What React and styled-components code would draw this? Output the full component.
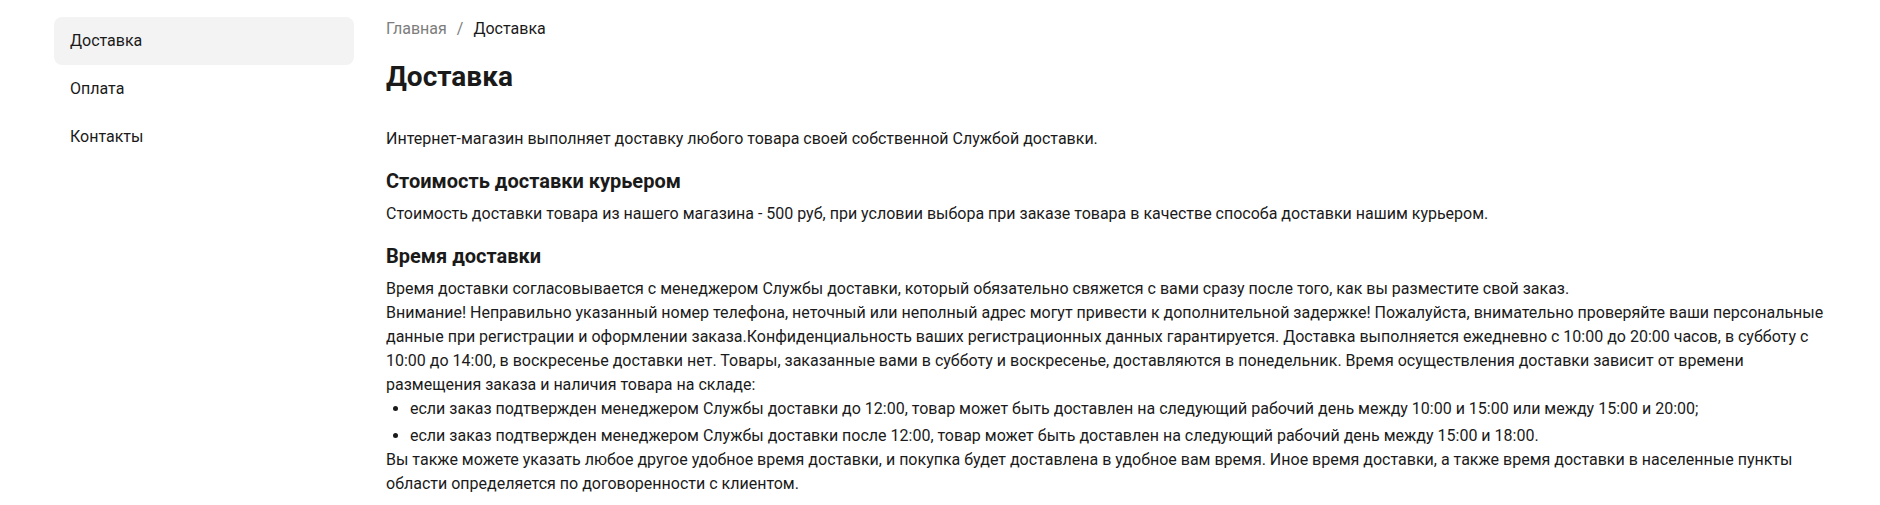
import { createGlobalStyle, styled } from "styled-components";

const GlobalStyle = createGlobalStyle`
  * { box-sizing: border-box; }
  body {
    margin: 0;
    background: #fff;
    font-family: Roboto, "Noto Sans", Arial, sans-serif;
    color: #1a1a1a;
  }
`;

const Page = styled.div`
  display: flex;
  gap: 32px;
  padding: 17px 54px 20px 54px;
`;

const Sidebar = styled.nav`
  width: 300px;
  flex-shrink: 0;
  display: flex;
  flex-direction: column;
`;

const NavItem = styled.a`
  display: block;
  padding: 12px 16px;
  font-size: 16px;
  line-height: 24px;
  color: #1a1a1a;
  text-decoration: none;
  border-radius: 8px;
  background: ${(p) => (p.$active ? "#f3f3f3" : "transparent")};
`;

const Main = styled.main`
  flex: 1;
  min-width: 0;
`;

const Breadcrumbs = styled.div`
  display: flex;
  gap: 10px;
  font-size: 16px;
  line-height: 24px;
`;

const Crumb = styled.span`
  color: ${(p) => (p.$muted ? "#7d7d7d" : "#1a1a1a")};
`;

const Title = styled.h1`
  margin: 18px 0 32px;
  font-size: 28px;
  line-height: 36px;
  font-weight: 700;
`;

const Subtitle = styled.h3`
  margin: 18px 0 9px;
  font-size: 20px;
  line-height: 24px;
  font-weight: 700;
`;

const Text = styled.p`
  margin: 0;
  font-size: 16px;
  line-height: 24px;
`;

const List = styled.ul`
  margin: 0;
  padding-left: 24px;
  font-size: 16px;
  line-height: 24px;

  li + li {
    margin-top: 3px;
  }
`;

const menu = [
  { label: "Доставка", active: true },
  { label: "Оплата" },
  { label: "Контакты" },
];

const App = () => {
  return (
    <Page>
      <GlobalStyle />
      <Sidebar>
        {menu.map((m) => (
          <NavItem key={m.label} href="#" $active={m.active}>
            {m.label}
          </NavItem>
        ))}
      </Sidebar>
      <Main>
        <Breadcrumbs>
          <Crumb $muted>Главная</Crumb>
          <Crumb $muted>/</Crumb>
          <Crumb>Доставка</Crumb>
        </Breadcrumbs>
        <Title>Доставка</Title>
        <Text>
          Интернет-магазин выполняет доставку любого товара своей собственной
          Службой доставки.
        </Text>
        <Subtitle>Стоимость доставки курьером</Subtitle>
        <Text>
          Стоимость доставки товара из нашего магазина - 500 руб, при условии
          выбора при заказе товара в качестве способа доставки нашим курьером.
        </Text>
        <Subtitle>Время доставки</Subtitle>
        <Text>
          Время доставки согласовывается с менеджером Службы доставки, который
          обязательно свяжется с вами сразу после того, как вы разместите свой
          заказ.
          <br />
          Внимание! Неправильно указанный номер телефона, неточный или неполный
          адрес могут привести к дополнительной задержке! Пожалуйста,
          внимательно проверяйте ваши персональные данные при регистрации и
          оформлении заказа.Конфиденциальность ваших регистрационных данных
          гарантируется. Доставка выполняется ежедневно с 10:00 до 20:00 часов,
          в субботу с 10:00 до 14:00, в воскресенье доставки нет. Товары,
          заказанные вами в субботу и воскресенье, доставляются в понедельник.
          Время осуществления доставки зависит от времени размещения заказа и
          наличия товара на складе:
        </Text>
        <List>
          <li>
            если заказ подтвержден менеджером Службы доставки до 12:00, товар
            может быть доставлен на следующий рабочий день между 10:00 и 15:00
            или между 15:00 и 20:00;
          </li>
          <li>
            если заказ подтвержден менеджером Службы доставки после 12:00, товар
            может быть доставлен на следующий рабочий день между 15:00 и 18:00.
          </li>
        </List>
        <Text>
          Вы также можете указать любое другое удобное время доставки, и покупка
          будет доставлена в удобное вам время. Иное время доставки, а также
          время доставки в населенные пункты области определяется по
          договоренности с клиентом.
        </Text>
      </Main>
    </Page>
  );
};

export default App;
